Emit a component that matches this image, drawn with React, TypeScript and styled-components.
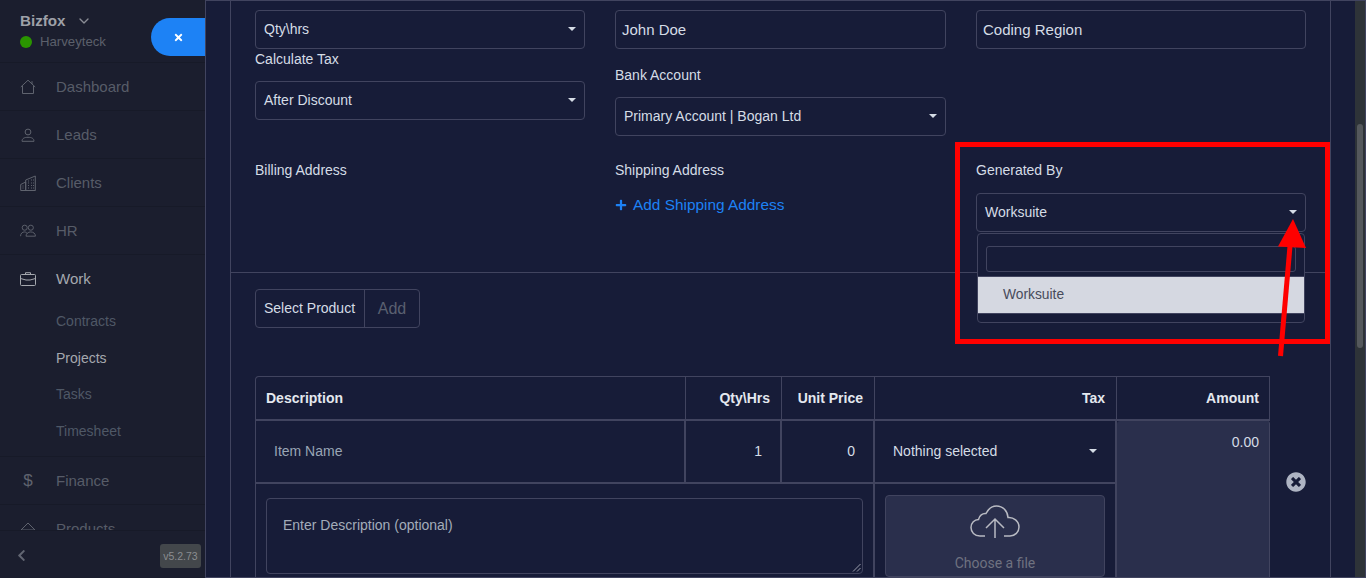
import React from "react";
import styled, { createGlobalStyle } from "styled-components";
import { FaChevronLeft, FaPlus, FaTimes, FaTimesCircle } from "react-icons/fa";
import { FiChevronDown } from "react-icons/fi";

const BORDER = "#41445f";
const PANEL = "#171c38";
const SIDE = "#1b1e2e";

const GlobalStyle = createGlobalStyle`
  * {
    box-sizing: border-box;
  }
  html, body {
    margin: 0;
    height: 100%;
    overflow: hidden;
    background: ${SIDE};
    font-family: "Liberation Sans", Arial, sans-serif;
  }
`;

const Page = styled.div`
  display: flex;
  width: 1366px;
  height: 578px;
  overflow: hidden;
  position: relative;
`;

const Sidebar = styled.aside`
  width: 205px;
  flex: none;
  height: 578px;
  display: flex;
  flex-direction: column;
  background: ${SIDE};
`;

const Brand = styled.div`
  height: 63px;
  flex: none;
  padding: 12px 20px 0;
  border-bottom: 1px solid #171a28;
`;

const BrandName = styled.div`
  display: flex;
  align-items: center;
  gap: 10px;
  font-size: 15.2px;
  line-height: 17px;
  font-weight: 700;
  color: #9ea1a8;
`;

const BrandUser = styled.div`
  display: flex;
  align-items: center;
  gap: 8px;
  margin-top: 5px;
  font-size: 13.2px;
  line-height: 16px;
  color: #5c606b;
`;

const Dot = styled.span`
  width: 12px;
  height: 12px;
  border-radius: 50%;
  background: #2a9500;
`;

const Nav = styled.nav`
  flex: 1;
  min-height: 0;
  overflow: hidden;
`;

const NavItem = styled.div<{ $open?: boolean }>`
  height: 48px;
  flex: none;
  display: flex;
  align-items: center;
  gap: 20px;
  padding-left: 20px;
  font-size: 15px;
  color: ${(p) => (p.$open ? "#a5a8ae" : "#575c68")};
  border-bottom: 1px solid ${(p) => (p.$open ? "transparent" : "#171a28")};
`;

const NavIcon = styled.span`
  width: 16px;
  height: 16px;
  display: flex;
  align-items: center;
  justify-content: center;
  color: #5f636e;
  flex: none;
  font-size: 17px;
`;

const SubMenu = styled.div`
  padding: 0 0 7px 56px;
  border-bottom: 1px solid #171a28;
`;

const SubItem = styled.div<{ $active?: boolean }>`
  height: 36.6px;
  display: flex;
  align-items: center;
  font-size: 14px;
  color: ${(p) => (p.$active ? "#a5a8ae" : "#4f5866")};
`;

const SideFooter = styled.div`
  height: 48px;
  flex: none;
  display: flex;
  align-items: center;
  justify-content: space-between;
  padding: 2px 4px 0 15px;
  border-top: 1px solid #171a28;
  color: #626672;
`;

const Version = styled.span`
  width: 41px;
  height: 24px;
  background: #43474b;
  color: #8a8d90;
  font-size: 10.5px;
  line-height: 24px;
  text-align: center;
  border-radius: 3px;
`;

const CloseTab = styled.button`
  position: absolute;
  left: 151px;
  top: 18px;
  width: 54px;
  height: 38px;
  padding: 0;
  border: 0;
  border-radius: 19px 0 0 19px;
  background: #1d82f5;
  color: #fff;
  display: flex;
  align-items: center;
  justify-content: center;
  font-size: 11px;
`;

const Modal = styled.main`
  flex: 1;
  height: 578px;
  padding-left: 24px;
  display: flex;
  background: ${PANEL};
  border: 1px solid ${BORDER};
  overflow: hidden;
`;

const Sheet = styled.div`
  width: 1101px;
  flex: none;
  border-left: 1px solid ${BORDER};
  border-right: 1px solid ${BORDER};
`;

const TopForm = styled.section`
  display: grid;
  grid-template-columns: 330px 331px 330px;
  column-gap: 30px;
  padding: 9px 24px 0;
  height: 272px;
  border-bottom: 1px solid ${BORDER};
`;

const Column = styled.div`
  display: flex;
  flex-direction: column;
`;

const Label = styled.div<{ $top?: number }>`
  margin-top: ${(p) => p.$top ?? 0}px;
  font-size: 14px;
  line-height: 20px;
  color: #d5dce6;
`;

const SelectBox = styled.div<{ $top?: number }>`
  margin-top: ${(p) => p.$top ?? 0}px;
  height: 39px;
  flex: none;
  display: flex;
  align-items: center;
  justify-content: space-between;
  padding: 0 8px 2px 8px;
  border: 1px solid ${BORDER};
  border-radius: 4px;
  font-size: 14px;
  color: #d5dce6;
`;

const Caret = styled.span`
  width: 0;
  height: 0;
  border-left: 4px solid transparent;
  border-right: 4px solid transparent;
  border-top: 4px solid #d5dce6;
`;

const TextBox = styled.div`
  height: 39px;
  flex: none;
  display: flex;
  align-items: center;
  padding-left: 6px;
  border: 1px solid ${BORDER};
  border-radius: 4px;
  font-size: 15px;
  color: #d5dce6;
`;

const AddLink = styled.div`
  margin-top: 15px;
  display: flex;
  align-items: center;
  gap: 6px;
  height: 20px;
  font-size: 15.4px;
  color: #1d82f5;
`;

const ProductRow = styled.div`
  padding: 16px 24px 48px;
  height: 103px;
`;

const ProductGroup = styled.div`
  display: inline-flex;
  height: 39px;
  width: 165px;
  border: 1px solid ${BORDER};
  border-radius: 4px;
  align-items: stretch;
`;

const ProductLabel = styled.div`
  width: 109px;
  display: flex;
  align-items: center;
  padding: 0 0 2px 8px;
  border-right: 1px solid ${BORDER};
  font-size: 14px;
  color: #d5dce6;
`;

const ProductAdd = styled.div`
  flex: 1;
  display: flex;
  align-items: center;
  justify-content: center;
  font-size: 16px;
  color: #5a6070;
`;

const TableWrap = styled.div`
  display: flex;
  padding-left: 24px;
`;

const Table = styled.div`
  width: 1015px;
  flex: none;
  display: grid;
  grid-template-columns: 431px 96px 93px 242px 153px;
  grid-template-rows: 45px 63px 110px;
`;

const HeadCell = styled.div<{ $right?: boolean }>`
  display: flex;
  align-items: center;
  justify-content: ${(p) => (p.$right ? "flex-end" : "flex-start")};
  padding: 0 ${(p) => (p.$right ? 11 : 10)}px 0 10px;
  font-size: 14px;
  font-weight: 700;
  color: #e4e8ef;
  border: 1px solid ${BORDER};
  border-bottom-width: 2px;
  border-left-width: ${(p) => (p.$right ? 0 : 1)}px;
  border-top-left-radius: ${(p) => (p.$right ? 0 : 4)}px;
`;

const AmountHead = styled(HeadCell)`
  padding-right: 10px;
`;

const Cell = styled.div<{ $right?: boolean; $first?: boolean }>`
  display: flex;
  align-items: center;
  justify-content: ${(p) => (p.$right ? "flex-end" : "flex-start")};
  padding: 0 18px 2px;
  font-size: 14px;
  color: #d5dce6;
  border-right: 2px solid ${BORDER};
  border-left: ${(p) => (p.$first ? `1px solid ${BORDER}` : 0)};
  border-bottom: 2px solid ${BORDER};
`;

const ItemName = styled(Cell)`
  color: #99a5b5;
`;

const TaxCell = styled(Cell)`
  justify-content: space-between;
`;

const AmountCell = styled.div`
  grid-column: 5;
  grid-row: 2 / span 2;
  background: #2a2f4c;
  border-right: 1px solid ${BORDER};
  border-radius: 3px 3px 0 0;
  padding: 13px 10px 0;
  text-align: right;
  font-size: 14px;
  line-height: 16px;
  color: #d5dce6;
`;

const DescCell = styled.div`
  grid-column: 1 / span 3;
  padding: 14px 10px 0 10px;
  border-left: 1px solid ${BORDER};
  border-right: 2px solid ${BORDER};
`;

const DescBox = styled.div`
  height: 76px;
  border: 1px solid ${BORDER};
  border-radius: 4px;
  padding: 18px 16px;
  font-size: 14px;
  line-height: 16px;
  color: #a3acba;
  position: relative;
`;

const Grip = styled.svg`
  position: absolute;
  right: 1px;
  bottom: 1px;
`;

const FileCell = styled.div`
  padding: 11px 10px 0 10px;
  border-right: 2px solid ${BORDER};
`;

const FileBox = styled.div`
  height: 82px;
  background: #2a2f4c;
  border: 1px solid ${BORDER};
  border-radius: 4px;
  display: flex;
  flex-direction: column;
  align-items: center;
  padding-top: 9px;
  font-size: 14px;
  line-height: 16px;
  color: #6f7280;
  font-family: Roboto, "Liberation Sans", sans-serif;
  gap: 17px;
`;

const RemoveCell = styled.div`
  flex: none;
  width: 52px;
  height: 212px;
  display: flex;
  align-items: center;
  justify-content: center;
  color: #aeb4c3;
  font-size: 20px;
`;

const Scrollbar = styled.div`
  margin-left: auto;
  width: 10px;
  flex: none;
  display: flex;
  justify-content: center;
  padding-top: 123px;
  background: #2e3338;
`;

const ScrollThumb = styled.div`
  width: 6px;
  height: 224px;
  border-radius: 3px;
  background: #54585c;
`;

const Dropdown = styled.div`
  position: absolute;
  left: 977px;
  top: 233px;
  width: 328px;
  height: 90px;
  border: 1px solid ${BORDER};
  border-radius: 4px;
  background: ${PANEL};
  padding-top: 12px;
`;

const SearchBox = styled.div`
  height: 26px;
  margin: 0 8px;
  border: 1px solid ${BORDER};
  border-radius: 3px;
`;

const Option = styled.div`
  margin-top: 4px;
  height: 37.5px;
  display: flex;
  align-items: center;
  padding-left: 25px;
  background: #d5d8e1;
  border-top: 1px solid ${BORDER};
  border-bottom: 1px solid ${BORDER};
  font-size: 13.8px;
  color: #474b5b;
`;

const RedFrame = styled.div`
  position: absolute;
  left: 955px;
  top: 142px;
  width: 375px;
  height: 202px;
  border: 5px solid #ff0000;
  pointer-events: none;
`;

const Arrow = styled.svg`
  position: absolute;
  left: 1270px;
  top: 216px;
  pointer-events: none;
`;

function HomeIcon() {
  return (
    <svg width="16" height="16" viewBox="0 0 16 16" fill="none" stroke="currentColor" strokeWidth="1">
      <path d="M.8 8 8 1.2 15.2 8M2.5 7v7.5h11V7M12 2.2v3" />
    </svg>
  );
}

function UserIcon() {
  return (
    <svg width="14" height="14" viewBox="0 0 14 14" fill="none" stroke="currentColor" strokeWidth="1">
      <circle cx="7" cy="4" r="2.9" />
      <path d="M1 13.3c0-3 2.5-4 6-4s6 1 6 4z" />
    </svg>
  );
}

function BuildingIcon() {
  return (
    <svg width="16" height="16" viewBox="0 0 16 16" fill="none" stroke="currentColor" strokeWidth="1">
      <path d="M.7 15.5V9.5l5-2.5V15.5M5.7 15.5V5l9.6-4v14.5zM.7 15.5h14.6" />
      <path d="M8 6h1M11 5h1M13 5h1M8 8h1M11 8h1M13 8h1M8 10.5h1M11 10.5h1M13 10.5h1M8 13h1M11 13h1M13 13h1M2.5 11h1M2.5 13h1" strokeDasharray="1 1" />
    </svg>
  );
}

function PeopleIcon() {
  return (
    <svg width="17" height="14" viewBox="0 0 17 14" fill="none" stroke="currentColor" strokeWidth="1">
      <circle cx="5" cy="3.5" r="2.7" />
      <circle cx="11.5" cy="3.5" r="2.7" />
      <path d="M.6 12.5c0-3 2-4.5 4-4.5 1.4 0 2.4.6 3 1.6M16.4 12.5c0-3-2.4-4.5-5-4.5s-5 1.5-5 4.5z" />
    </svg>
  );
}

function BriefcaseIcon() {
  return (
    <svg width="16" height="14" viewBox="0 0 16 14" fill="none" stroke="#a5a8ae" strokeWidth="1">
      <rect x=".5" y="2.5" width="15" height="11" rx="1" />
      <path d="M5.5 2.5V.7h5v1.8M.5 6.5l5.5 1.5h4l5.5-1.5" />
    </svg>
  );
}

function ProductIcon() {
  return (
    <svg width="16" height="14" viewBox="0 0 16 14" fill="none" stroke="currentColor" strokeWidth="1">
      <path d="M8 1 1 8h14zM1 8v5.5h14V8" />
    </svg>
  );
}

function CloudIcon() {
  return (
    <svg width="50" height="33" viewBox="0 0 50 33" fill="none" stroke="#b8bac2" strokeWidth="1.5">
      <path d="M15 31H10C4.5 31 1 27 1 22.5 1 18 4.5 14.5 8.5 14.5c.8-4 4-6.5 7.5-6C18.5 3.5 22.5 1 26.5 1c6.5 0 11 5 11.5 11.5 5.5-.5 11 3.5 11 9.5 0 5-4 9-9 9h-6" />
      <path d="M25 33V14M16 23l9-9 9 9" />
    </svg>
  );
}

const navTop = [
  { label: "Dashboard", icon: <HomeIcon /> },
  { label: "Leads", icon: <UserIcon /> },
  { label: "Clients", icon: <BuildingIcon /> },
  { label: "HR", icon: <PeopleIcon /> },
];

const subItems = ["Contracts", "Projects", "Tasks", "Timesheet"];

export default function App() {
  return (
    <Page>
      <GlobalStyle />
      <Sidebar>
        <Brand>
          <BrandName>
            Bizfox <FiChevronDown size={16} color="#8a8d95" />
          </BrandName>
          <BrandUser>
            <Dot /> Harveyteck
          </BrandUser>
        </Brand>
        <Nav>
          {navTop.map((item) => (
            <NavItem key={item.label}>
              <NavIcon>{item.icon}</NavIcon>
              {item.label}
            </NavItem>
          ))}
          <NavItem $open>
            <NavIcon>
              <BriefcaseIcon />
            </NavIcon>
            Work
          </NavItem>
          <SubMenu>
            {subItems.map((s) => (
              <SubItem key={s} $active={s === "Projects"}>
                {s}
              </SubItem>
            ))}
          </SubMenu>
          <NavItem>
            <NavIcon>$</NavIcon>
            Finance
          </NavItem>
          <NavItem>
            <NavIcon>
              <ProductIcon />
            </NavIcon>
            Products
          </NavItem>
        </Nav>
        <SideFooter>
          <FaChevronLeft size={13} />
          <Version>v5.2.73</Version>
        </SideFooter>
      </Sidebar>
      <CloseTab>
        <FaTimes />
      </CloseTab>

      <Modal>
        <Sheet>
          <TopForm>
            <Column>
              <SelectBox>
                Qty\hrs
                <Caret />
              </SelectBox>
              <Label>Calculate Tax</Label>
              <SelectBox $top={12}>
                After Discount
                <Caret />
              </SelectBox>
              <Label $top={40}>Billing Address</Label>
            </Column>
            <Column>
              <TextBox>John Doe</TextBox>
              <Label $top={16}>Bank Account</Label>
              <SelectBox $top={12}>
                Primary Account | Bogan Ltd
                <Caret />
              </SelectBox>
              <Label $top={24}>Shipping Address</Label>
              <AddLink>
                <FaPlus size={12} /> Add Shipping Address
              </AddLink>
            </Column>
            <Column>
              <TextBox>Coding Region</TextBox>
              <Label $top={111}>Generated By</Label>
              <SelectBox $top={13}>
                Worksuite
                <Caret />
              </SelectBox>
            </Column>
          </TopForm>

          <ProductRow>
            <ProductGroup>
              <ProductLabel>Select Product</ProductLabel>
              <ProductAdd>Add</ProductAdd>
            </ProductGroup>
          </ProductRow>

          <TableWrap>
            <Table>
              <HeadCell>Description</HeadCell>
              <HeadCell $right>Qty\Hrs</HeadCell>
              <HeadCell $right>Unit Price</HeadCell>
              <HeadCell $right>Tax</HeadCell>
              <AmountHead $right>Amount</AmountHead>
              <ItemName $first>Item Name</ItemName>
              <Cell $right>1</Cell>
              <Cell $right>0</Cell>
              <TaxCell>
                Nothing selected
                <Caret />
              </TaxCell>
              <AmountCell>0.00</AmountCell>
              <DescCell>
                <DescBox>
                  Enter Description (optional)
                  <Grip width="9" height="9" viewBox="0 0 9 9" stroke="#9a9cab" strokeWidth="1">
                    <path d="M1 8.5 8.5 1M5 8.5 8.5 5" />
                  </Grip>
                </DescBox>
              </DescCell>
              <FileCell>
                <FileBox>
                  <CloudIcon />
                  Choose a file
                </FileBox>
              </FileCell>
            </Table>
            <RemoveCell>
              <FaTimesCircle />
            </RemoveCell>
          </TableWrap>
        </Sheet>
        <Scrollbar>
          <ScrollThumb />
        </Scrollbar>
      </Modal>

      <Dropdown>
        <SearchBox />
        <Option>Worksuite</Option>
      </Dropdown>
      <RedFrame />
      <Arrow width="40" height="142" viewBox="0 0 40 142">
        <path d="M10.5 140 20 30" stroke="#ff0000" strokeWidth="5" />
        <path d="M23 3 8 30.5 36 32z" fill="#ff0000" />
      </Arrow>
    </Page>
  );
}
